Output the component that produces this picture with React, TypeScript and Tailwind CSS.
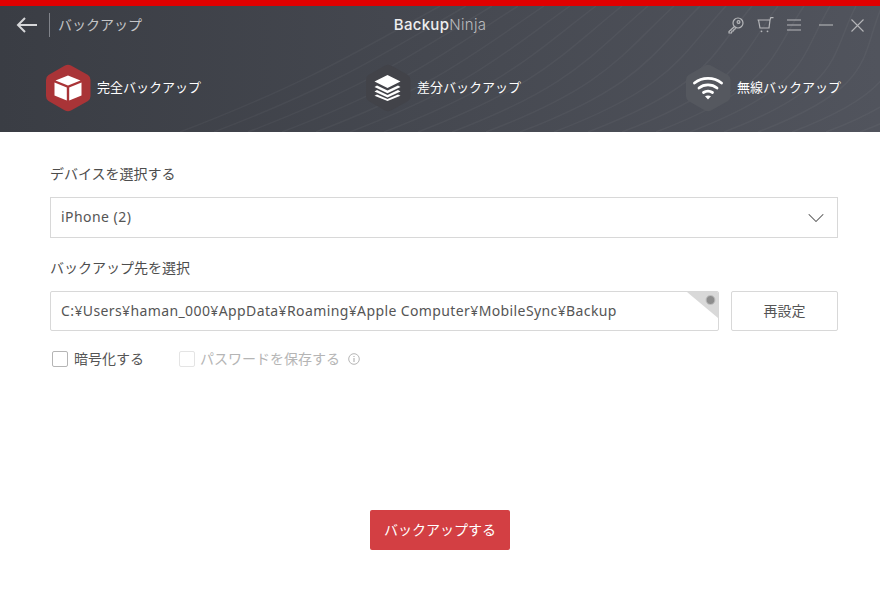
import { ChevronDown } from "lucide-react"

const fontStack = "font-['Noto_Sans','Noto_Sans_CJK_JP',sans-serif]"

function Hex({ fill, children }: { fill: string; children: React.ReactNode }) {
  return (
    <div className="relative w-[46px] h-[48px] shrink-0">
      <svg width="46" height="48" viewBox="0 0 46 48" className="absolute inset-0">
        <path
          d="M20 1.500q3-1.500 6 0L43 11q2.500 1.700 2.500 5v16q0 3.300-2.500 5L26 46.500q-3 1.500-6 0L3.500 37q-2.500-1.700-2.500-5V16q0-3.300 2.500-5Z"
          fill={fill}
        />
      </svg>
      <div className="absolute inset-0 flex items-center justify-center">{children}</div>
    </div>
  )
}

function BoxIcon() {
  return (
    <svg width="28" height="26" viewBox="0 0 28 26" fill="#fff">
      <path d="M14 0.500L26.500 5.500L14 10.500L1.500 5.500Z" />
      <path d="M0.500 7.500L12.800 12.500V25.500L0.500 20.500Z" />
      <path d="M27.500 7.500L15.200 12.500V25.500L27.500 20.500Z" />
    </svg>
  )
}

function StackIcon() {
  return (
    <svg width="27" height="26" viewBox="0 0 27 26" fill="#fff">
      <path d="M13.500 0L26.500 6.500L13.500 13L0.500 6.500Z" />
      <path d="M3 10.500L13.500 15.500L24 10.500L26.500 12L13.500 18.200L0.500 12Z" />
      <path d="M3 15L13.500 20L24 15L26.500 16.500L13.500 22.500L0.500 16.500Z" />
      <path d="M3 19.500L13.500 24L24 19.500L26.500 20.800L13.500 26L0.500 20.800Z" />
    </svg>
  )
}

function WifiIcon() {
  return (
    <svg width="30" height="24" viewBox="0 0 30 24" fill="none" stroke="#fff" strokeWidth="2.800" strokeLinecap="round">
      <path d="M1.500 7C9 0.700 21 0.700 28.500 7" />
      <path d="M6 12C11 7.800 19 7.800 24 12" />
      <path d="M10.500 16.500C13 14.800 17 14.800 19.500 16.500" />
      <path d="M15 23.500L12 20.300Q15 18.800 18 20.300Z" fill="#fff" stroke="none" />
    </svg>
  )
}

function HeaderWaves() {
  // faint contour lines behind the header
  const lines = Array.from({ length: 22 }, (_, i) => i)
  return (
    <svg className="absolute inset-0" width="880" height="126" viewBox="0 0 880 126" fill="none">
      {lines.map((i) => (
        <path
          key={i}
          d={`M${180 + i * 34} 126C${300 + i * 34} 80 ${350 + i * 30} 50 ${440 + i * 26} 0`}
          stroke="#ffffff"
          strokeOpacity="0.04"
          strokeWidth="1.500"
        />
      ))}
    </svg>
  )
}

function ModeTab({ icon, fill, label }: { icon: React.ReactNode; fill: string; label: string }) {
  return (
    <div className="flex items-center gap-[6px]">
      <Hex fill={fill}>{icon}</Hex>
      <span className="pb-[2px] text-[13px] leading-[18px] text-white whitespace-nowrap">{label}</span>
    </div>
  )
}

export default function App() {
  return (
    <div className={`w-[880px] h-[590px] bg-white overflow-hidden flex flex-col ${fontStack}`}>
      <div className="h-[6px] bg-[#e00000]" />

      <header className="relative h-[126px] bg-gradient-to-r from-[#3a3d44] to-[#51545d]">
        <HeaderWaves />

        <div className="relative h-[38px] flex items-center">
          <div className="w-[329px] flex items-center pl-[16px]">
            <svg width="22" height="16" viewBox="0 0 22 16" fill="none" stroke="#d6d7d9" strokeWidth="2">
              <path d="M21 8H2M9 1L2 8L9 15" />
            </svg>
            <div className="w-px h-[24px] bg-[#80838a] ml-[11px] mr-[8px]" />
            <span className="text-[14px] text-[#c4c5c8] pb-[1px]">バックアップ</span>
          </div>
          <div className="w-[222px] text-center text-[15px] tracking-[0.3px] font-['Inter',sans-serif]">
            <span className="font-medium text-[#eeeeef]">Backup</span>
            <span className="font-light text-[#b9babd]">Ninja</span>
          </div>
          <div className="flex-1 flex items-center justify-end pr-[16px] gap-[13px]">
            <svg width="16" height="17" viewBox="0 0 16 17" fill="none" stroke="#b5b6b9" strokeWidth="1.200">
              <circle cx="10" cy="6" r="5" />
              <circle cx="10.500" cy="5" r="1.400" />
              <path d="M6.500 9.500L1 14.500V16H3.500L4 14H5.500L6 12.500L8 11.500" />
            </svg>
            <svg width="17" height="16" viewBox="0 0 17 16" fill="none" stroke="#b5b6b9" strokeWidth="1.200">
              <path d="M0.500 3H13L12 11H3L1.500 3M13 3L13.800 0.600H16.500" />
              <circle cx="4.500" cy="14.300" r="0.900" fill="#b5b6b9" stroke="none" />
              <circle cx="10.500" cy="14.300" r="0.900" fill="#b5b6b9" stroke="none" />
            </svg>
            <svg width="14" height="12" viewBox="0 0 14 12" stroke="#b5b6b9" strokeWidth="1.100">
              <path d="M0 1H14M0 6H14M0 11H14" />
            </svg>
            <svg width="14" height="12" viewBox="0 0 14 12" stroke="#b5b6b9" strokeWidth="1.100" className="ml-[5px]">
              <path d="M0 6H14" />
            </svg>
            <svg width="13" height="13" viewBox="0 0 13 13" stroke="#b5b6b9" strokeWidth="1.100" className="ml-[5px]">
              <path d="M0.500 0.500L12.500 12.500M12.500 0.500L0.500 12.500" />
            </svg>
          </div>
        </div>

        <div className="relative flex items-center justify-between pl-[45px] pr-[39px] mt-[20px]">
          <ModeTab icon={<BoxIcon />} fill="#a93437" label="完全バックアップ" />
          <ModeTab icon={<StackIcon />} fill="#424349" label="差分バックアップ" />
          <ModeTab icon={<WifiIcon />} fill="#55585f" label="無線バックアップ" />
        </div>
      </header>

      <main className="flex-1 flex flex-col pl-[50px] pr-[42px] pt-[32px] pb-[40px]">
        <label className="text-[14px] leading-[20px] text-[#4d4d4d]">デバイスを選択する</label>
        <div className="mt-[13px] h-[41px] border border-[#d8d8d8] flex items-center justify-between pl-[10px] pr-[13px]">
          <span className="pb-[2px] text-[14px] tracking-[0.45px] text-[#555]">iPhone (2)</span>
          <ChevronDown className="w-[28px] h-[28px] -mr-[6px] text-[#555]" strokeWidth={0.900} />
        </div>

        <label className="mt-[20px] text-[14px] leading-[20px] text-[#4d4d4d]">バックアップ先を選択</label>
        <div className="mt-[13px] flex gap-[12px]">
          <div className="relative flex-1 h-[40px] border border-[#d8d8d8] rounded-[2px] flex items-center pl-[10px] overflow-hidden">
            <span className="pb-[2px] text-[14px] tracking-[0.39px] text-[#555] whitespace-nowrap">
              C:¥Users¥haman_000¥AppData¥Roaming¥Apple Computer¥MobileSync¥Backup
            </span>
            <svg width="32" height="26" viewBox="0 0 32 26" className="absolute top-0 right-0">
              <path d="M1 0H32V26Z" fill="#d9d9d9" />
              <circle cx="24.500" cy="8" r="4.500" fill="#8d8d8d" stroke="#c2c2c2" />
            </svg>
          </div>
          <button className="w-[107px] h-[40px] pb-[2px] border border-[#d8d8d8] rounded-[2px] text-[14px] text-[#555]">
            再設定
          </button>
        </div>

        <div className="mt-[18px] flex items-center pl-[2px]">
          <span className="w-[16px] h-[16px] border border-[#b5b5b5] rounded-[2px]" />
          <span className="ml-[6px] text-[14px] leading-[20px] text-[#555]">暗号化する</span>
          <span className="ml-[35px] w-[16px] h-[16px] border border-[#e4e4e4] rounded-[2px]" />
          <span className="ml-[5px] text-[14px] leading-[20px] text-[#b5b5b5]">パスワードを保存する</span>
          <svg width="12" height="12" viewBox="0 0 12 12" fill="none" className="ml-[8px]">
            <circle cx="6" cy="6" r="5.300" stroke="#b5b5b5" />
            <path d="M6 5V9M6 3V4" stroke="#b5b5b5" strokeWidth="1.200" />
          </svg>
        </div>

        <button className="mt-auto ml-[320px] self-start w-[140px] h-[40px] pb-[1px] bg-[#d33f43] rounded-[2px] text-[14px] text-white">
          バックアップする
        </button>
      </main>
    </div>
  )
}
